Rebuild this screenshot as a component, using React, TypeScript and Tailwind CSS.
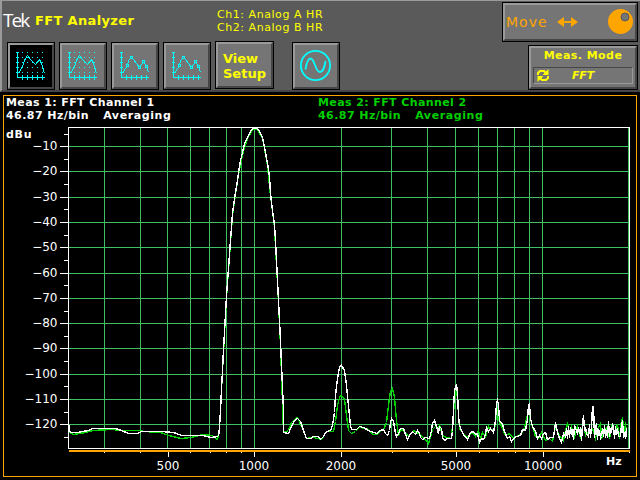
import React from "react";
import clsx from "clsx";

type Point = [number, number];

const gridY = [146, 171, 197, 222, 247, 273, 298, 323, 348, 374, 399, 424];
const minorY = [134, 159, 184, 209, 235, 260, 285, 311, 336, 361, 386, 412, 437];
const gridX = [
  104, 140, 167, 190, 209, 226, 241, 254, 341, 391, 427, 455, 478, 497, 514,
  529, 542, 628,
];
const minorX = [104, 140, 190, 210, 226, 241, 392, 428, 479, 498, 515, 529, 629];
const majorX = [
  { x: 168, label: "500" },
  { x: 254, label: "1000" },
  { x: 341, label: "2000" },
  { x: 456, label: "5000" },
  { x: 543, label: "10000" },
];

const channel1: Point[] = [
  [68, 422], [69, 431], [71, 432], [77, 432], [82, 431], [88, 430], [92, 428],
  [115, 428], [121, 430], [128, 433], [137, 433], [141, 431], [160, 431],
  [173, 432], [181, 435], [194, 435], [203, 435], [210, 437], [218, 436],
  [219, 427], [220, 410], [221, 388], [222, 370], [223, 349], [226, 295],
  [230, 240], [232, 213], [234, 198], [237, 180], [238, 172], [240, 160],
  [242, 152], [244, 143], [247, 137], [249, 133], [251, 129], [253, 128],
  [257, 128], [259, 131], [262, 137], [264, 147], [267, 163], [269, 176],
  [270, 193], [272, 210], [274, 225], [275, 240], [278, 300], [280, 341],
  [281, 364], [282, 387], [283, 410], [283, 432], [288, 433], [290, 428],
  [294, 420], [297, 418], [300, 421], [303, 430], [306, 438], [310, 438],
  [313, 436], [318, 436], [320, 439], [323, 436], [326, 431], [330, 430],
  [332, 425], [334, 412], [335, 395], [337, 378], [339, 367], [341, 365],
  [344, 370], [346, 385], [348, 405], [350, 425], [351, 429], [356, 429],
  [359, 426], [363, 427], [368, 430], [373, 432], [377, 433], [380, 430],
  [383, 429], [385, 433], [387, 435], [389, 430], [390, 422], [391, 418],
  [393, 421], [395, 433], [396, 436], [398, 433], [400, 428], [403, 428],
  [405, 434], [407, 439], [409, 435], [412, 431], [415, 434], [417, 430],
  [419, 433], [420, 437], [422, 439], [425, 437], [429, 438], [431, 430],
  [432, 423], [434, 420], [436, 426], [438, 433], [439, 426], [441, 428],
  [442, 437], [444, 440], [447, 438], [451, 438], [452, 431], [453, 409],
  [454, 390], [456, 384], [457, 393], [458, 415], [459, 425], [461, 430],
  [463, 434], [467, 439], [470, 432], [473, 431], [475, 434], [477, 433],
  [479, 442], [481, 438], [483, 439], [485, 434], [486, 427], [488, 431],
  [490, 428], [493, 432], [495, 420], [496, 403], [497, 400], [498, 404],
  [499, 420], [502, 424], [504, 431], [507, 438], [509, 436], [511, 441],
  [513, 438], [516, 436], [520, 435], [522, 429], [525, 430], [527, 419],
  [528, 405], [529, 404], [530, 418], [532, 426], [535, 431], [537, 438],
  [539, 435], [541, 438], [543, 433], [545, 432], [547, 439], [550, 437],
  [553, 437], [555, 422], [557, 432], [559, 438], [561, 442], [563, 433],
  [565, 436], [566, 428], [567, 438], [568, 426], [569, 437], [570, 427],
  [571, 432], [572, 429], [573, 439], [574, 425], [575, 428], [577, 433],
  [578, 427], [579, 433], [580, 427], [581, 440], [582, 424], [583, 415],
  [584, 430], [585, 427], [586, 433], [588, 436], [589, 424], [590, 437],
  [591, 427], [592, 406], [593, 406], [594, 437], [595, 430], [596, 423],
  [597, 439], [598, 429], [599, 430], [600, 438], [601, 436], [602, 428],
  [603, 436], [604, 425], [605, 437], [606, 430], [607, 437], [608, 421],
  [609, 436], [610, 428], [611, 432], [612, 424], [613, 426], [614, 438],
  [615, 426], [616, 434], [617, 428], [618, 436], [620, 436], [621, 424],
  [622, 420], [623, 437], [624, 432], [625, 438], [626, 428], [626, 436],
];

const channel2: Point[] = [
  [68, 422], [69, 432], [73, 434], [85, 432], [92, 430], [112, 429],
  [121, 430], [140, 430], [143, 431], [160, 432], [168, 435], [181, 438],
  [190, 437], [203, 434], [211, 435], [217, 439], [219, 428], [221, 390],
  [223, 352], [226, 297], [230, 242], [232, 215], [234, 200], [238, 174],
  [242, 154], [247, 138], [251, 131], [253, 129], [257, 129], [262, 138],
  [264, 148], [267, 165], [270, 195], [274, 227], [278, 302], [280, 345],
  [283, 432], [288, 430], [291, 422], [295, 418],
  [297, 417], [302, 428], [306, 438], [313, 437], [321, 439], [326, 431],
  [333, 431], [335, 421], [337, 405], [339, 397], [341, 395], [344, 399],
  [346, 415], [348, 430], [351, 433], [355, 431], [359, 427], [366, 428],
  [373, 434], [377, 434], [380, 430], [383, 429], [386, 422], [388, 405],
  [390, 391], [392, 388], [394, 397], [396, 420], [398, 435], [400, 429],
  [403, 430], [408, 436], [413, 430], [418, 433], [425, 439], [428, 443],
  [432, 429], [435, 426], [438, 429], [439, 424], [442, 435], [446, 437],
  [451, 438], [454, 400], [456, 385], [459, 428], [466, 437], [472, 432],
  [475, 436], [478, 430], [480, 438], [482, 432], [485, 436], [488, 426],
  [491, 430], [494, 429], [497, 408], [499, 422], [502, 428], [505, 435],
  [509, 433], [513, 438], [521, 433], [524, 427], [528, 410], [531, 423],
  [535, 436], [538, 438], [541, 432], [545, 440], [549, 438], [552, 441],
  [555, 426], [559, 435], [563, 440], [566, 426], [567, 422], [569, 435],
  [571, 427], [574, 436], [577, 426], [580, 438], [583, 420], [585, 435],
  [588, 431], [592, 428], [595, 438], [598, 427], [600, 423], [601, 438],
  [604, 431], [607, 426], [609, 438], [612, 423], [614, 433], [617, 424],
  [619, 438], [621, 420], [622, 418], [624, 434], [625, 422], [626, 436],
];

const toPoints = (points: Point[]) =>
  points.map(([x, y]) => `${x + 0.5},${y + 0.5}`).join(" ");

const Bevel = ({
  className,
  active,
  children,
}: {
  className?: string;
  active?: boolean;
  children: React.ReactNode;
}) => (
  <div className={clsx("shrink-0 border border-black", className)}>
    <div
      className={clsx(
        "h-full w-full border-2 border-t-[#9a9a9a] border-r-[#464646] border-b-[#464646] border-l-[#9a9a9a]",
        active ? "bg-black" : "bg-[#757575]"
      )}
    >
      {children}
    </div>
  </div>
);

const GraphIcon = ({ markers }: { markers?: boolean }) => (
  <svg
    width="30"
    height="30"
    viewBox="0 0 30 30"
    fill="none"
    stroke="#00ffff"
    shapeRendering="crispEdges"
  >
    <path d="M1.5 1v26M1 26.5h28M0 1.5h3M0 6.5h3M0 11.5h3M0 16.5h3M0 21.5h3M6.5 24v5M11.5 24v5M16.5 24v5M21.5 24v5M26.5 24v5" />
    {markers ? (
      <>
        <path d="M3.5 22V20.5L7.5 14.5L8.5 9.5L11.5 6L19.5 16.5L23.5 10.5L26.5 15.5L28.5 21.5" />
        <path
          fill="#757575"
          d="M6.5 13.5h2v2h-2zM10.5 5.5h2v2h-2zM18.5 15.5h2v2h-2zM22.5 9.5h2v2h-2zM25.5 14.5h2v2h-2z"
        />
      </>
    ) : (
      <>
        <path d="M3.5 22V20.5L6.5 15.5L8.5 9.5L11.5 4.5L14.5 8.5L19.5 13.5L23.5 8.5L25.5 12.5L28.5 22.5" />
        <path
          strokeDasharray="1 4"
          d="M6 1.5h22M6 6.5h22M6 11.5h22M6 16.5h22M6 21.5h22"
        />
      </>
    )}
  </svg>
);

const GraphButton = ({
  active,
  markers,
}: {
  active?: boolean;
  markers?: boolean;
}) => (
  <Bevel active={active} className="h-12 w-12">
    <div className="pt-[6px] pl-[6px]">
      <GraphIcon markers={markers} />
    </div>
  </Bevel>
);

const Toolbar = () => (
  <div className="flex h-[92px] border-t border-b-2 border-l-2 border-t-[#9a9a9a] border-b-[#464646] border-l-[#9a9a9a] bg-[#5a5a5a]">
    <div className="w-[213px] shrink-0">
      <div className="flex h-[41px] items-start pt-[9px] whitespace-nowrap">
        <span className="w-[33px] pl-px font-['Open_Sans'] text-[19px] leading-[20px] tracking-[-1.9px] text-white">
          Tek
        </span>
        <span className="pt-[3px] font-['DejaVu_Sans'] text-[13px] leading-[16px] font-bold tracking-[0.35px] text-[#ffff00]">
          FFT Analyzer
        </span>
      </div>
      <div className="flex gap-1 pl-[5px]">
        <GraphButton active />
        <GraphButton />
        <GraphButton markers />
        <GraphButton markers />
      </div>
    </div>
    <div className="w-[286px] shrink-0">
      <div className="h-10 pt-[7px] pl-[2px] font-['DejaVu_Sans'] text-[11px] leading-[13px] tracking-[0.55px] whitespace-nowrap text-[#ffff00]">
        <p>Ch1: Analog A HR</p>
        <p>Ch2: Analog B HR</p>
      </div>
      <div className="flex items-start">
        <Bevel className="h-12 w-[59px]">
          <div className="pt-[7px] pl-[5px] font-['DejaVu_Sans'] text-[13px] leading-[15px] font-bold text-[#ffff00]">
            <p>View</p>
            <p>Setup</p>
          </div>
        </Bevel>
        <Bevel className="mt-px ml-[18px] h-12 w-12">
          <div className="pt-[5px] pl-[5px]">
            <svg
              width="32"
              height="32"
              viewBox="0 0 32 32"
              fill="none"
              stroke="#00ffff"
              strokeWidth="1.8"
            >
              <circle cx="15.5" cy="15.5" r="14.6" />
              <path d="M5.5 19.5C6.500 13 8 8.500 10.500 8.500C15 8.500 15 22 20 22C23.500 22 24.500 17 25.500 11" />
            </svg>
          </div>
        </Bevel>
      </div>
    </div>
    <div className="flex flex-1 flex-col items-end pt-px pr-[2px]">
      <Bevel className="h-10 w-[136px]">
        <div className="flex h-full items-center font-['DejaVu_Sans'] text-[14px] tracking-[1px] text-[#ffa500]">
          <span className="w-[52px] pl-[1px]">Move</span>
          <svg width="22" height="10" viewBox="0 0 22 10" fill="#ffa500">
            <path d="M0 5L7 0V4H14V0L21 5L14 10V6H7V10Z" />
          </svg>
          <svg className="ml-[29px]" width="26" height="26" viewBox="0 0 26 26">
            <circle cx="12.5" cy="12.5" r="12.5" fill="#ffa500" />
            <circle cx="17" cy="8" r="4" fill="#757575" stroke="#5a5a5a" />
          </svg>
        </div>
      </Bevel>
      <Bevel className="mt-[3px] h-[45px] w-[110px]">
        <div className="px-[2px] pt-[1px] font-['DejaVu_Sans'] text-[11px] leading-[14px] font-bold text-[#ffff00]">
          <p className="text-center tracking-[0.45px] whitespace-nowrap">
            Meas. Mode
          </p>
          <div className="mt-[4px] flex h-[17px] items-center border border-t-[#464646] border-r-[#9a9a9a] border-b-[#9a9a9a] border-l-[#464646] pl-[3px]">
            <svg
              width="12"
              height="13"
              viewBox="0 0 12 13"
              fill="none"
              stroke="#ffff00"
              strokeWidth="2"
            >
              <path d="M1 6V4L3 2H7L9 4M11 7V9L9 11H5L3 9" />
              <path fill="#ffff00" stroke="none" d="M11.500 0V6H5.500ZM0.500 13V7H6.500Z" />
            </svg>
            <span className="pl-[23px] tracking-[-0.2px] italic">FFT</span>
          </div>
        </div>
      </Bevel>
    </div>
  </div>
);

const MeasureInfo = ({ name, color }: { name: string; color: string }) => (
  <div className={clsx("w-[312px] whitespace-nowrap", color)}>
    <p className="tracking-[0.4px]">{name}</p>
    <p className="tracking-[0.45px]">
      46.87 Hz/bin
      <span className="pl-[14px] tracking-[0.6px]">Averaging</span>
    </p>
  </div>
);

// Plot coordinates are screen pixels, the view box starts below the header rows.
const Spectrum = () => (
  <svg
    width="632"
    height="351"
    viewBox="4 124 632 351"
    shapeRendering="crispEdges"
    fontFamily="DejaVu Sans"
    fontSize="12"
    fill="#ffffff"
  >
    <path
      d={
        gridY.map((y) => `M69 ${y + 0.5}H629`).join("") +
        gridX.map((x) => `M${x + 0.5} 128V448`).join("")
      }
      stroke="#40c060"
    />
    <g fill="none" strokeWidth="1.4">
      <polyline points={toPoints(channel2)} stroke="#00d000" />
      <polyline points={toPoints(channel1)} stroke="#ffffff" />
    </g>
    <rect x="68.5" y="127.5" width="561" height="321" fill="none" stroke="#ffffff" />
    <rect x="69" y="450" width="561" height="2" fill="#ffa500" />
    <path
      d={
        gridY.map((y) => `M60 ${y + 0.5}H68`).join("") +
        minorY.map((y) => `M64 ${y + 0.5}H68`).join("") +
        minorX.map((x) => `M${x + 0.5} 452V453`).join("") +
        majorX.map(({ x }) => `M${x + 0.5} 452V457`).join("")
      }
      stroke="#ffffff"
    />
    {gridY.map((y, i) => (
      <text key={y} x="57.5" y={y + 4} textAnchor="end">
        {`−${(i + 1) * 10}`}
      </text>
    ))}
    {majorX.map(({ x, label }) => (
      <text key={label} x={x} y="470" textAnchor="middle">
        {label}
      </text>
    ))}
    <g fontSize="11" fontWeight="bold">
      <text x="6" y="138" letterSpacing="0.7">
        dBu
      </text>
      <text x="606" y="465">
        Hz
      </text>
    </g>
  </svg>
);

const App = () => {
  return (
    <div className="flex h-[480px] w-[640px] flex-col overflow-hidden bg-black">
      <Toolbar />
      <div className="mt-[3px] ml-[3px] h-[382px] w-[634px] border border-[#ffa500]">
        <div className="flex h-[28px] pl-[2px] font-['DejaVu_Sans'] text-[11px] leading-[13px] font-bold">
          <MeasureInfo name="Meas 1: FFT Channel 1" color="text-white" />
          <MeasureInfo name="Meas 2: FFT Channel 2" color="text-[#00d000]" />
        </div>
        <Spectrum />
      </div>
    </div>
  );
};

export default App;
